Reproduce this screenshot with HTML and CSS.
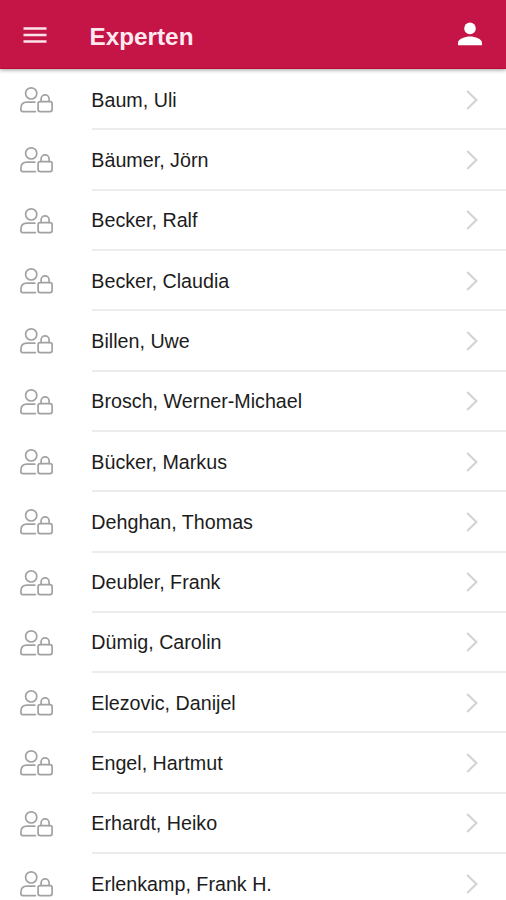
FILE: index.html
```html
<!DOCTYPE html>
<html lang="de">
<head>
  <meta charset="UTF-8">
  <meta name="viewport" content="width=device-width, initial-scale=1">
  <title>Experten</title>
  <link rel="stylesheet" href="styles.css">
</head>
<body>
  <!-- Icons -->
  <svg class="sprite" width="0" height="0">
    <symbol id="icon-expert" viewBox="0 0 34 28">
      <g fill="none" stroke="#a2a2a2" stroke-width="1.7" stroke-linecap="round" stroke-linejoin="round">
        <circle cx="11.2" cy="7.4" r="5.6" />
        <path d="M15.4 25.6H2.8Q.9 25.6 .9 23.8V22.4Q.9 16.2 7 16.2H14.8" />
        <rect x="18.1" y="15.6" width="14" height="10" rx="2" />
        <path d="M21.1 15.4V12.9a4 4 0 0 1 8 0V15.4" />
      </g>
    </symbol>
    <symbol id="icon-arrow" viewBox="0 0 12 20">
      <path d="M1.2 1 L10.4 10 L1.2 19" fill="none" stroke="#d4d4d4" stroke-width="2.2" />
    </symbol>
  </svg>

  <header class="toolbar">
    <button class="menu-btn" aria-label="Menü">
      <svg width="24" height="18" viewBox="0 0 24 18"><path d="M.5 2.5h23M.5 9h23M.5 15.5h23" stroke="#fbe3ea" stroke-width="2.6" /></svg>
    </button>
    <h1>Experten</h1>
    <button class="user-btn" aria-label="Profil">
      <svg width="24" height="24" viewBox="0 0 24 24" fill="#fff"><circle cx="12" cy="6.4" r="5.8" /><path d="M0 23.2v-2.4C0 17 7 14.6 12 14.6S24 17 24 20.8v2.4z" /></svg>
    </button>
  </header>

  <ul class="list" id="expertList"></ul>

  <script>
    const names = [
      "Baum, Uli",
      "Bäumer, Jörn",
      "Becker, Ralf",
      "Becker, Claudia",
      "Billen, Uwe",
      "Brosch, Werner-Michael",
      "Bücker, Markus",
      "Dehghan, Thomas",
      "Deubler, Frank",
      "Dümig, Carolin",
      "Elezovic, Danijel",
      "Engel, Hartmut",
      "Erhardt, Heiko",
      "Erlenkamp, Frank H."
    ];

    // Liste aufbauen
    document.getElementById("expertList").innerHTML = names.map(name => `
      <li class="item">
        <svg class="item-icon"><use href="#icon-expert" /></svg>
        <div class="item-inner">
          <span class="item-name">${name}</span>
          <svg class="item-arrow"><use href="#icon-arrow" /></svg>
        </div>
      </li>`).join("");
  </script>
</body>
</html>
```
FILE: styles.css
```css
* { box-sizing: border-box; }

body {
  margin: 0;
  height: 100vh;
  overflow: hidden;
  background: #fff;
  color: #1c1c1c;
  font-family: "Liberation Sans", Arial, sans-serif;
}

.sprite { display: none; }

/* Kopfzeile */
.toolbar {
  position: relative;
  display: flex;
  align-items: center;
  height: 69px;
  padding: 0 24px 0 23px;
  background: #c51446;
  border-bottom: 1px solid #b90c3c;
  box-shadow: 0 1px 4px rgba(0, 0, 0, 0.4);
}

.toolbar h1 {
  flex: 1;
  margin: 5px 0 0 42.5px;
  color: #fde9ef;
  font-size: 24.3px;
  font-weight: bold;
  line-height: 30px;
}

.toolbar button {
  padding: 0;
  border: none;
  background: none;
}

.toolbar svg { display: block; }

.menu-btn { margin-top: 2px; }

/* Liste */
.list {
  margin: 0;
  padding: 1px 0 0;
  list-style: none;
}

.item {
  display: flex;
  height: 60.32px;
  padding-left: 20px;
}

.item-icon {
  flex: none;
  width: 34px;
  height: 28px;
  margin: 16px 38px 0 0;
}

.item-inner {
  display: flex;
  flex: 1;
  align-items: center;
  justify-content: space-between;
  padding: 1px 28px 0 0;
  border-bottom: 2px solid #ececec;
}

.item-name {
  margin-left: -0.7px;
  font-size: 19.7px;
  line-height: 24px;
}

.item-arrow {
  width: 12px;
  height: 20px;
}
```
